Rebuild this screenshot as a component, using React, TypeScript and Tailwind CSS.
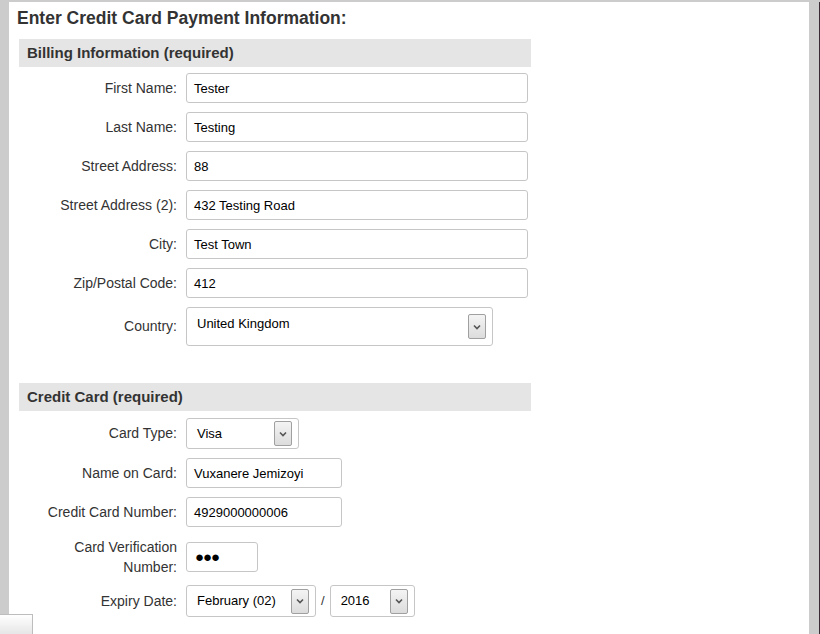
import React from "react";

const font = { fontFamily: '"Liberation Sans", Arial, sans-serif' };

function Chevron() {
  return (
    <span className="flex h-[25px] w-[18px] items-center justify-center rounded-[2px] border border-[#a0a0a0] bg-gradient-to-b from-[#f4f4f4] to-[#dcdcdc]">
      <svg width="8" height="6" viewBox="0 0 8 6">
        <path d="M1 1.5 L4 4.5 L7 1.5" stroke="#555" strokeWidth="1.6" fill="none" />
      </svg>
    </span>
  );
}

function Field({ label, value, width }: { label: string; value: string; width: string }) {
  return (
    <div className="flex items-center">
      <label className="w-[158px] text-right text-[14px] text-[#333]">{label}</label>
      <div className={`ml-[9px] flex h-[30px] items-center rounded-[3px] border border-[#c6c6c6] bg-white pl-[7px] pt-[1px] text-[13px] text-black ${width}`}>
        {value}
      </div>
    </div>
  );
}

function Select({ value, width, height = "h-[31px]" }: { value: string; width: string; height?: string }) {
  return (
    <div className={`flex items-center justify-between rounded-[3px] border border-[#c6c6c6] bg-white pl-[10px] pr-[6px] text-[13px] text-black ${width} ${height}`}>
      <span>{value}</span>
      <Chevron />
    </div>
  );
}

function SectionHeader({ title }: { title: string }) {
  return (
    <div className="flex h-[28px] w-[512px] items-center bg-[#e5e5e5] pl-[8px] pt-[1px] text-[15px] font-bold text-[#333]">
      {title}
    </div>
  );
}

export default function App() {
  return (
    <div style={font} className="relative flex h-[634px] w-[820px] overflow-hidden bg-[#cccccc] pt-[2px] pl-[9px]">
      <div className="h-full w-[800px] bg-white pl-[8px]">
        <h1 className="mt-[6px] text-[17.5px] leading-[20px] font-bold text-[#333]">Enter Credit Card Payment Information:</h1>

        <div className="ml-[2px] mt-[11px]">
          <SectionHeader title="Billing Information (required)" />
          <div className="mt-[6px] flex flex-col gap-[9px]">
            <Field label="First Name:" value="Tester" width="w-[342px]" />
            <Field label="Last Name:" value="Testing" width="w-[342px]" />
            <Field label="Street Address:" value="88" width="w-[342px]" />
            <Field label="Street Address (2):" value="432 Testing Road" width="w-[342px]" />
            <Field label="City:" value="Test Town" width="w-[342px]" />
            <Field label="Zip/Postal Code:" value="412" width="w-[342px]" />
            <div className="flex items-center">
              <label className="w-[158px] text-right text-[14px] text-[#333]">Country:</label>
              <div className="ml-[9px] flex h-[39px] w-[307px] items-center justify-between rounded-[3px] border border-[#c6c6c6] bg-white pl-[10px] pr-[6px] text-[13px] text-black">
                <span className="-mt-[5px]">United Kingdom</span>
                <Chevron />
              </div>
            </div>
          </div>

          <div className="mt-[37px]">
            <SectionHeader title="Credit Card (required)" />
          </div>
          <div className="mt-[7px] flex flex-col">
            <div className="flex items-center">
              <label className="w-[158px] text-right text-[14px] text-[#333]">Card Type:</label>
              <div className="ml-[9px]">
                <Select value="Visa" width="w-[113px]" />
              </div>
            </div>
            <div className="mt-[9px]">
              <Field label="Name on Card:" value="Vuxanere Jemizoyi" width="w-[156px]" />
            </div>
            <div className="mt-[9px]">
              <Field label="Credit Card Number:" value="4929000000006" width="w-[156px]" />
            </div>
            <div className="mt-[10px] flex items-center">
              <label className="w-[158px] text-right text-[14px] leading-[20px] text-[#333]">
                Card Verification
                <br />
                Number:
              </label>
              <div className="ml-[9px] flex h-[30px] w-[72px] items-center rounded-[3px] border border-[#c6c6c6] bg-white pl-[8px] text-[15px] tracking-[-1px] text-black">
                ●●●
              </div>
            </div>
            <div className="mt-[8px] flex items-center">
              <label className="w-[158px] text-right text-[14px] text-[#333]">Expiry Date:</label>
              <div className="ml-[9px] flex items-center">
                <Select value="February (02)" width="w-[130px]" height="h-[32px]" />
                <span className="mx-[5px] text-[13px] text-[#333]">/</span>
                <Select value="2016" width="w-[85px]" height="h-[32px]" />
              </div>
            </div>
          </div>
        </div>
      </div>
      <div className="ml-auto h-full w-[1px] bg-[#3a2a35]" />
      <div className="absolute bottom-0 left-0 h-[20px] w-[33px] border-t border-r border-[#bdbdbd] bg-gradient-to-b from-white to-[#e6e6e6]" />
    </div>
  );
}
